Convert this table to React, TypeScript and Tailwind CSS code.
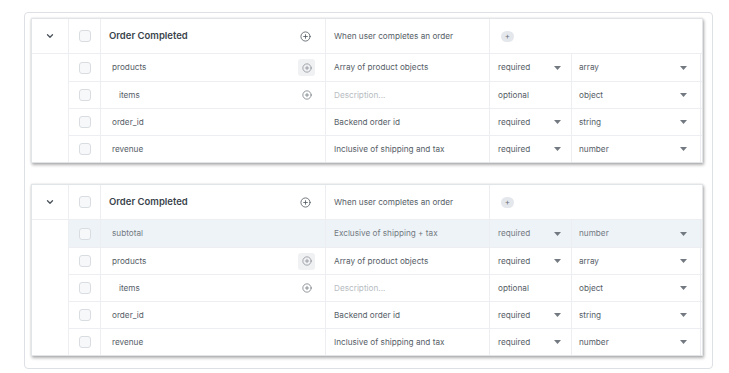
import { ChevronDown, CirclePlus } from 'lucide-react'

type Field = {
  name: string
  desc: string
  req: 'required' | 'optional'
  type: string
  indent?: boolean
  plus?: 'box' | 'plain'
  placeholder?: boolean
  active?: boolean
}

const baseFields: Field[] = [
  { name: 'products', desc: 'Array of product objects', req: 'required', type: 'array', plus: 'box' },
  { name: 'items', desc: 'Description...', req: 'optional', type: 'object', indent: true, plus: 'plain', placeholder: true },
  { name: 'order_id', desc: 'Backend order id', req: 'required', type: 'string' },
  { name: 'revenue', desc: 'Inclusive of shipping and tax', req: 'required', type: 'number' },
]

const secondFields: Field[] = [
  { name: 'subtotal', desc: 'Exclusive of shipping + tax', req: 'required', type: 'number', active: true },
  ...baseFields,
]

function Caret() {
  return (
    <svg width="7" height="4" viewBox="0 0 7 4" className="shrink-0">
      <path d="M0 0h7L3.5 4z" fill="#737980" />
    </svg>
  )
}

function Checkbox() {
  return <div className="w-[12px] h-[12px] rounded-[3px] border border-[#d9dde1] bg-[#f7f8f9]" />
}

function FieldRow({ f, first }: { f: Field; first: boolean }) {
  const txt = f.active ? 'text-[#737a82]' : 'text-[#565e67]'
  return (
    <div className={`flex h-[27px] ${first ? '' : 'border-t border-[#eceef1]'} ${f.active ? 'bg-[#eef3f8]' : ''}`}>
      <div className="w-[32px] flex items-center justify-center border-r border-[#eceef1]">
        <Checkbox />
      </div>
      <div
        className={`w-[225px] flex items-center justify-between pr-[10px] border-r border-[#eceef1] ${
          f.indent ? 'pl-[18px]' : 'pl-[11px]'
        }`}
      >
        <span className={txt}>{f.name}</span>
        {f.plus === 'box' && (
          <div className="w-[17px] h-[17px] rounded-[3px] bg-[#f0f1f3] flex items-center justify-center">
            <CirclePlus size={10} strokeWidth={1.6} color="#7a8088" />
          </div>
        )}
        {f.plus === 'plain' && (
          <div className="w-[17px] h-[17px] flex items-center justify-center">
            <CirclePlus size={10} strokeWidth={1.6} color="#5f666e" />
          </div>
        )}
      </div>
      <div className="w-[164px] flex items-center pl-[8px] border-r border-[#eceef1]">
        <span className={f.placeholder ? 'text-[#b7bcc1]' : txt}>{f.desc}</span>
      </div>
      <div className="w-[82px] flex items-center justify-between pl-[8px] pr-[10px] border-r border-[#eceef1]">
        <span className={txt}>{f.req}</span>
        {f.req === 'required' && <Caret />}
      </div>
      <div className="w-[129px] flex items-center justify-between pl-[7px] pr-[13px] border-r border-[#eceef1]">
        <span className={txt}>{f.type}</span>
        <Caret />
      </div>
    </div>
  )
}

function EventCard({ fields }: { fields: Field[] }) {
  return (
    <div className="w-[672px] bg-white border border-[#e2e5e8] shadow-[0_0_2px_rgba(0,0,0,0.12),1px_2px_3px_rgba(0,0,0,0.3)] text-[8.2px]">
      <div className="flex h-[35px] border-b border-[#eceef1]">
        <div className="w-[37px] flex items-center justify-center border-r border-[#eceef1]">
          <ChevronDown size={10} strokeWidth={3.2} color="#4b535c" />
        </div>
        <div className="w-[32px] flex items-center justify-center border-r border-[#eceef1]">
          <Checkbox />
        </div>
        <div className="w-[225px] flex items-center justify-between pl-[8px] pr-[14px] border-r border-[#eceef1]">
          <span className="text-[9.5px] font-semibold text-[#3a434c]">Order Completed</span>
          <CirclePlus size={11} strokeWidth={1.7} color="#4b535c" />
        </div>
        <div className="w-[164px] flex items-center pl-[8px] border-r border-[#eceef1]">
          <span className="text-[#565e67]">When user completes an order</span>
        </div>
        <div className="flex-1 flex items-center pl-[11px]">
          <div className="w-[13px] h-[11px] rounded-full bg-[#e4e7eb] flex items-center justify-center text-[8px] leading-none text-[#6b7178]">
            +
          </div>
        </div>
      </div>
      <div className="flex">
        <div className="w-[37px] border-r border-[#eceef1]" />
        <div className="flex-1">
          {fields.map((f, i) => (
            <FieldRow key={f.name} f={f} first={i === 0} />
          ))}
        </div>
      </div>
    </div>
  )
}

export default function App() {
  return (
    <div
      className="w-[729px] h-[373px] bg-white pt-[12px] pl-[24px]"
      style={{ fontFamily: 'Inter, "Noto Sans", sans-serif' }}
    >
      <div className="w-[689px] h-[357px] border border-[#dde0e4] rounded-[4px] pt-[5px] pl-[6px] flex flex-col gap-[21px]">
        <EventCard fields={baseFields} />
        <EventCard fields={secondFields} />
      </div>
    </div>
  )
}
